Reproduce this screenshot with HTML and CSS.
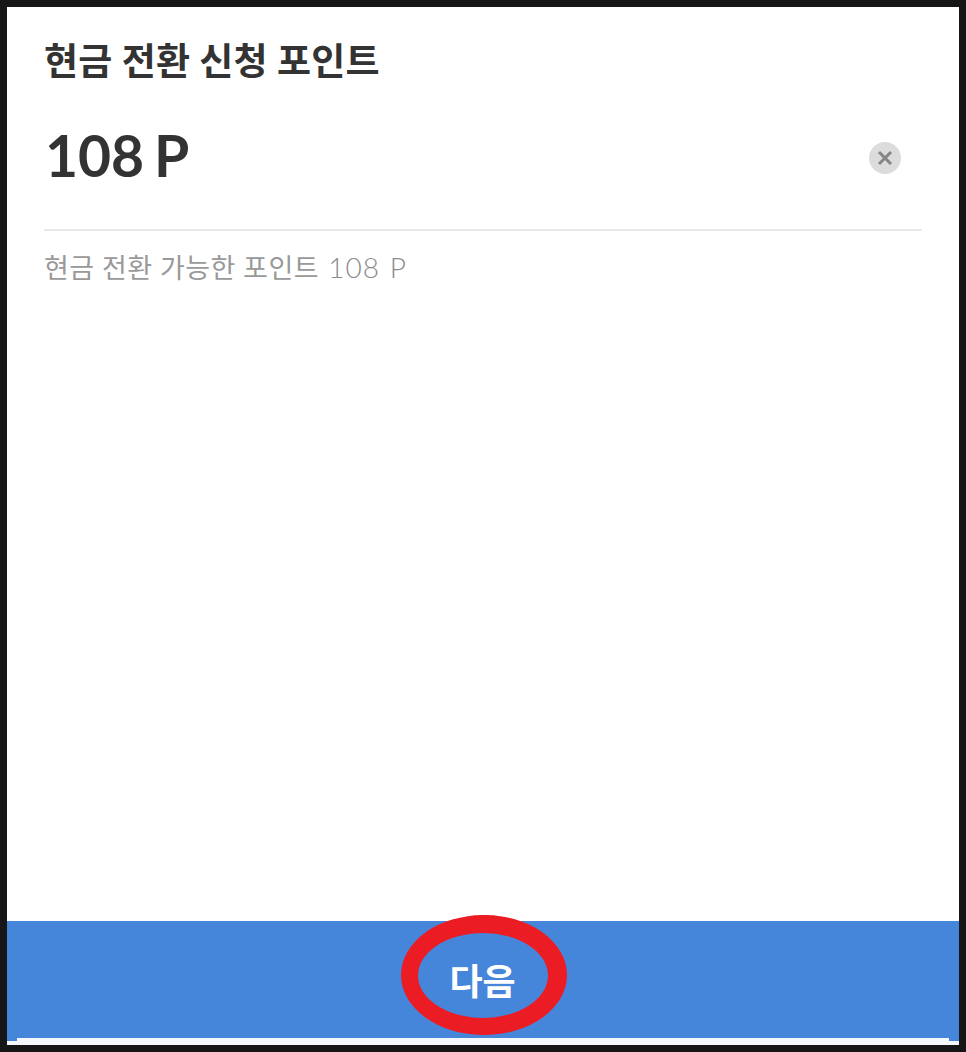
FILE: index.html
```html
<!DOCTYPE html>
<html lang="ko">
<head>
  <meta charset="UTF-8" />
  <meta name="viewport" content="width=device-width, initial-scale=1" />
  <title>현금 전환 신청</title>
  <link rel="stylesheet" href="styles.css">
</head>
<body>
  <div class="screen">
    <main class="content">
      <h1 class="title">현금 전환 신청 포인트</h1>
      <div class="amount-row">
        <span class="amount">108 P</span>
        <button type="button" class="clear-btn" aria-label="지우기">
          <svg viewBox="0 0 32 32" width="32" height="32">
            <path d="M10 10 L22 22 M22 10 L10 22" />
          </svg>
        </button>
      </div>
      <p class="hint">현금 전환 가능한 포인트 <span class="hint-value">108 P</span></p>
    </main>
    <footer class="footer">
      <div class="next-bar">
        <span class="next-label">다음</span>
        <svg class="circle-mark" viewBox="0 0 166 120" width="166" height="120">
          <path fill-rule="evenodd" d="M0 60 A83 60 0 1 1 166 60 A83 60 0 1 1 0 60 Z M17 60.5 A65 42.5 0 1 0 147 60.5 A65 42.5 0 1 0 17 60.5 Z" />
        </svg>
      </div>
      <div class="base-strip"><div class="base-inner"></div></div>
    </footer>
  </div>
</body>
</html>
```

FILE: styles.css
```css
html, body {
  height: 100%;
}
body {
  margin: 0;
  padding: 7px;
  box-sizing: border-box;
  background-color: #161616;
  font-family: Lato, "Noto Sans CJK KR", sans-serif;
  overflow: hidden;
}
.screen {
  height: 1038px;
  background: #fff;
  display: flex;
  flex-direction: column;
}
.content {
  flex: 1;
  padding: 0 37px;
}
.title {
  margin: 0;
  padding-top: 29px;
  font-size: 37px;
  line-height: 50px;
  font-weight: 700;
  letter-spacing: 0.2px;
  color: #333;
}
.amount-row {
  display: flex;
  align-items: center;
  justify-content: space-between;
  height: 145px;
  padding-right: 21px;
  border-bottom: 2px solid #e8e8e8;
  box-sizing: border-box;
}
.amount {
  font-size: 57px;
  font-weight: 700;
  color: #333;
  padding-left: 1px;
  padding-bottom: 5px;
  word-spacing: -4px;
}
.clear-btn {
  width: 32px;
  height: 32px;
  padding: 0;
  margin-top: 1px;
  border: none;
  border-radius: 50%;
  background-color: #dcdcdc;
}
.clear-btn svg {
  display: block;
}
.clear-btn path {
  stroke: #858585;
  stroke-width: 3;
  fill: none;
}
.hint {
  margin: 14px 0 0;
  font-size: 27px;
  line-height: 44px;
  color: #999;
  letter-spacing: 0.45px;
}
.hint-value {
  margin-left: 2px;
  font-size: 28px;
  font-weight: 300;
  letter-spacing: 1px;
  word-spacing: 1px;
  color: #8c8c8c;
}
.footer {
  flex: none;
}
.next-bar {
  position: relative;
  height: 117px;
  background-color: #4686da;
  display: flex;
  align-items: center;
  justify-content: center;
}
.next-label {
  font-size: 36px;
  font-weight: 700;
  color: #fff;
  margin-right: 1px;
  padding-bottom: 1px;
}
.circle-mark {
  position: absolute;
  left: 394px;
  top: -6px;
  fill: #ec1c24;
}
.base-strip {
  height: 7px;
  background: linear-gradient(#4686da 3px, #f4f8fd 3px);
}
.base-inner {
  height: 3px;
  margin: 0 10px;
  background-color: #f4f8fd;
}
```
